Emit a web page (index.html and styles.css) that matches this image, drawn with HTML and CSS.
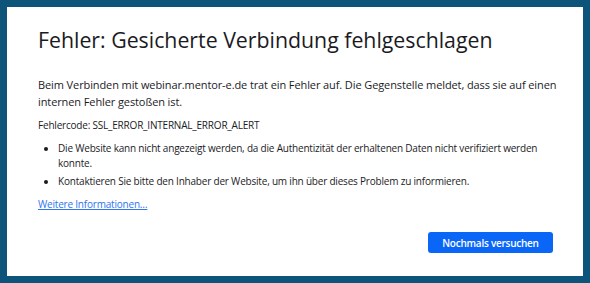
FILE: index.html
```html
<!DOCTYPE html>
<html lang="de">
<head>
  <meta charset="UTF-8">
  <title>Fehler: Gesicherte Verbindung fehlgeschlagen</title>
  <link rel="stylesheet" href="styles.css">
</head>
<body>
  <div class="frame">
    <main class="error-page">
      <h1 class="error-title">Fehler: Gesicherte Verbindung fehlgeschlagen</h1>
      <p class="error-intro">Beim Verbinden mit webinar.mentor-e.de trat ein Fehler auf. Die Gegenstelle meldet, dass sie auf einen internen Fehler gestoßen ist.</p>
      <p class="error-code">Fehlercode: SSL_ERROR_INTERNAL_ERROR_ALERT</p>
      <ul class="error-list">
        <li>Die Website kann nicht angezeigt werden, da die Authentizität der erhaltenen Daten nicht verifiziert werden konnte.</li>
        <li>Kontaktieren Sie bitte den Inhaber der Website, um ihn über dieses Problem zu informieren.</li>
      </ul>
      <a class="learn-more" href="#">Weitere Informationen…</a>
      <div class="actions">
        <button class="button" type="button">Nochmals versuchen</button>
      </div>
    </main>
  </div>
</body>
</html>
```

FILE: styles.css
```css
:root {
  --frame: #0c5479;
  --text: #1b1b1f;
  --link: #2f74f0;
  --primary: #0a66f7;
}

html, body {
  margin: 0;
  padding: 0;
}

body {
  background-color: var(--frame);
  font-family: "Open Sans", "Noto Sans", sans-serif;
  color: var(--text);
}

.frame {
  padding: 7px;
  height: 269px;
}

.error-page {
  background-color: #fff;
  height: 100%;
  box-sizing: border-box;
  padding: 19px 22px 0 31px;
  display: flex;
  flex-direction: column;
}

.error-title {
  font-size: 21.3px;
  font-weight: 400;
  margin: 0 0 22px;
  line-height: 28px;
}

.error-intro {
  font-size: 11px;
  letter-spacing: -0.1px;
  line-height: 17px;
  margin: 0 0 7px;
}

.error-code, .error-list, .learn-more {
  font-size: 10px;
  letter-spacing: -0.2px;
}

.error-code {
  line-height: 17px;
  margin: 0 0 7px;
}

.error-list {
  line-height: 15px;
  margin: 0 0 5px;
  padding-left: 20px;
}

.error-list li {
  margin-bottom: 3px;
}

.learn-more {
  color: var(--link);
  align-self: flex-start;
}

.actions {
  display: flex;
  justify-content: flex-end;
  margin-top: auto;
  padding: 0 8px 23px 0;
}

.button {
  font-family: inherit;
  font-size: 10px;
  font-weight: 600;
  letter-spacing: -0.25px;
  color: #fff;
  background-color: var(--primary);
  border: none;
  border-radius: 3px;
  width: 125px;
  height: 21px;
  padding: 0;
}
```
